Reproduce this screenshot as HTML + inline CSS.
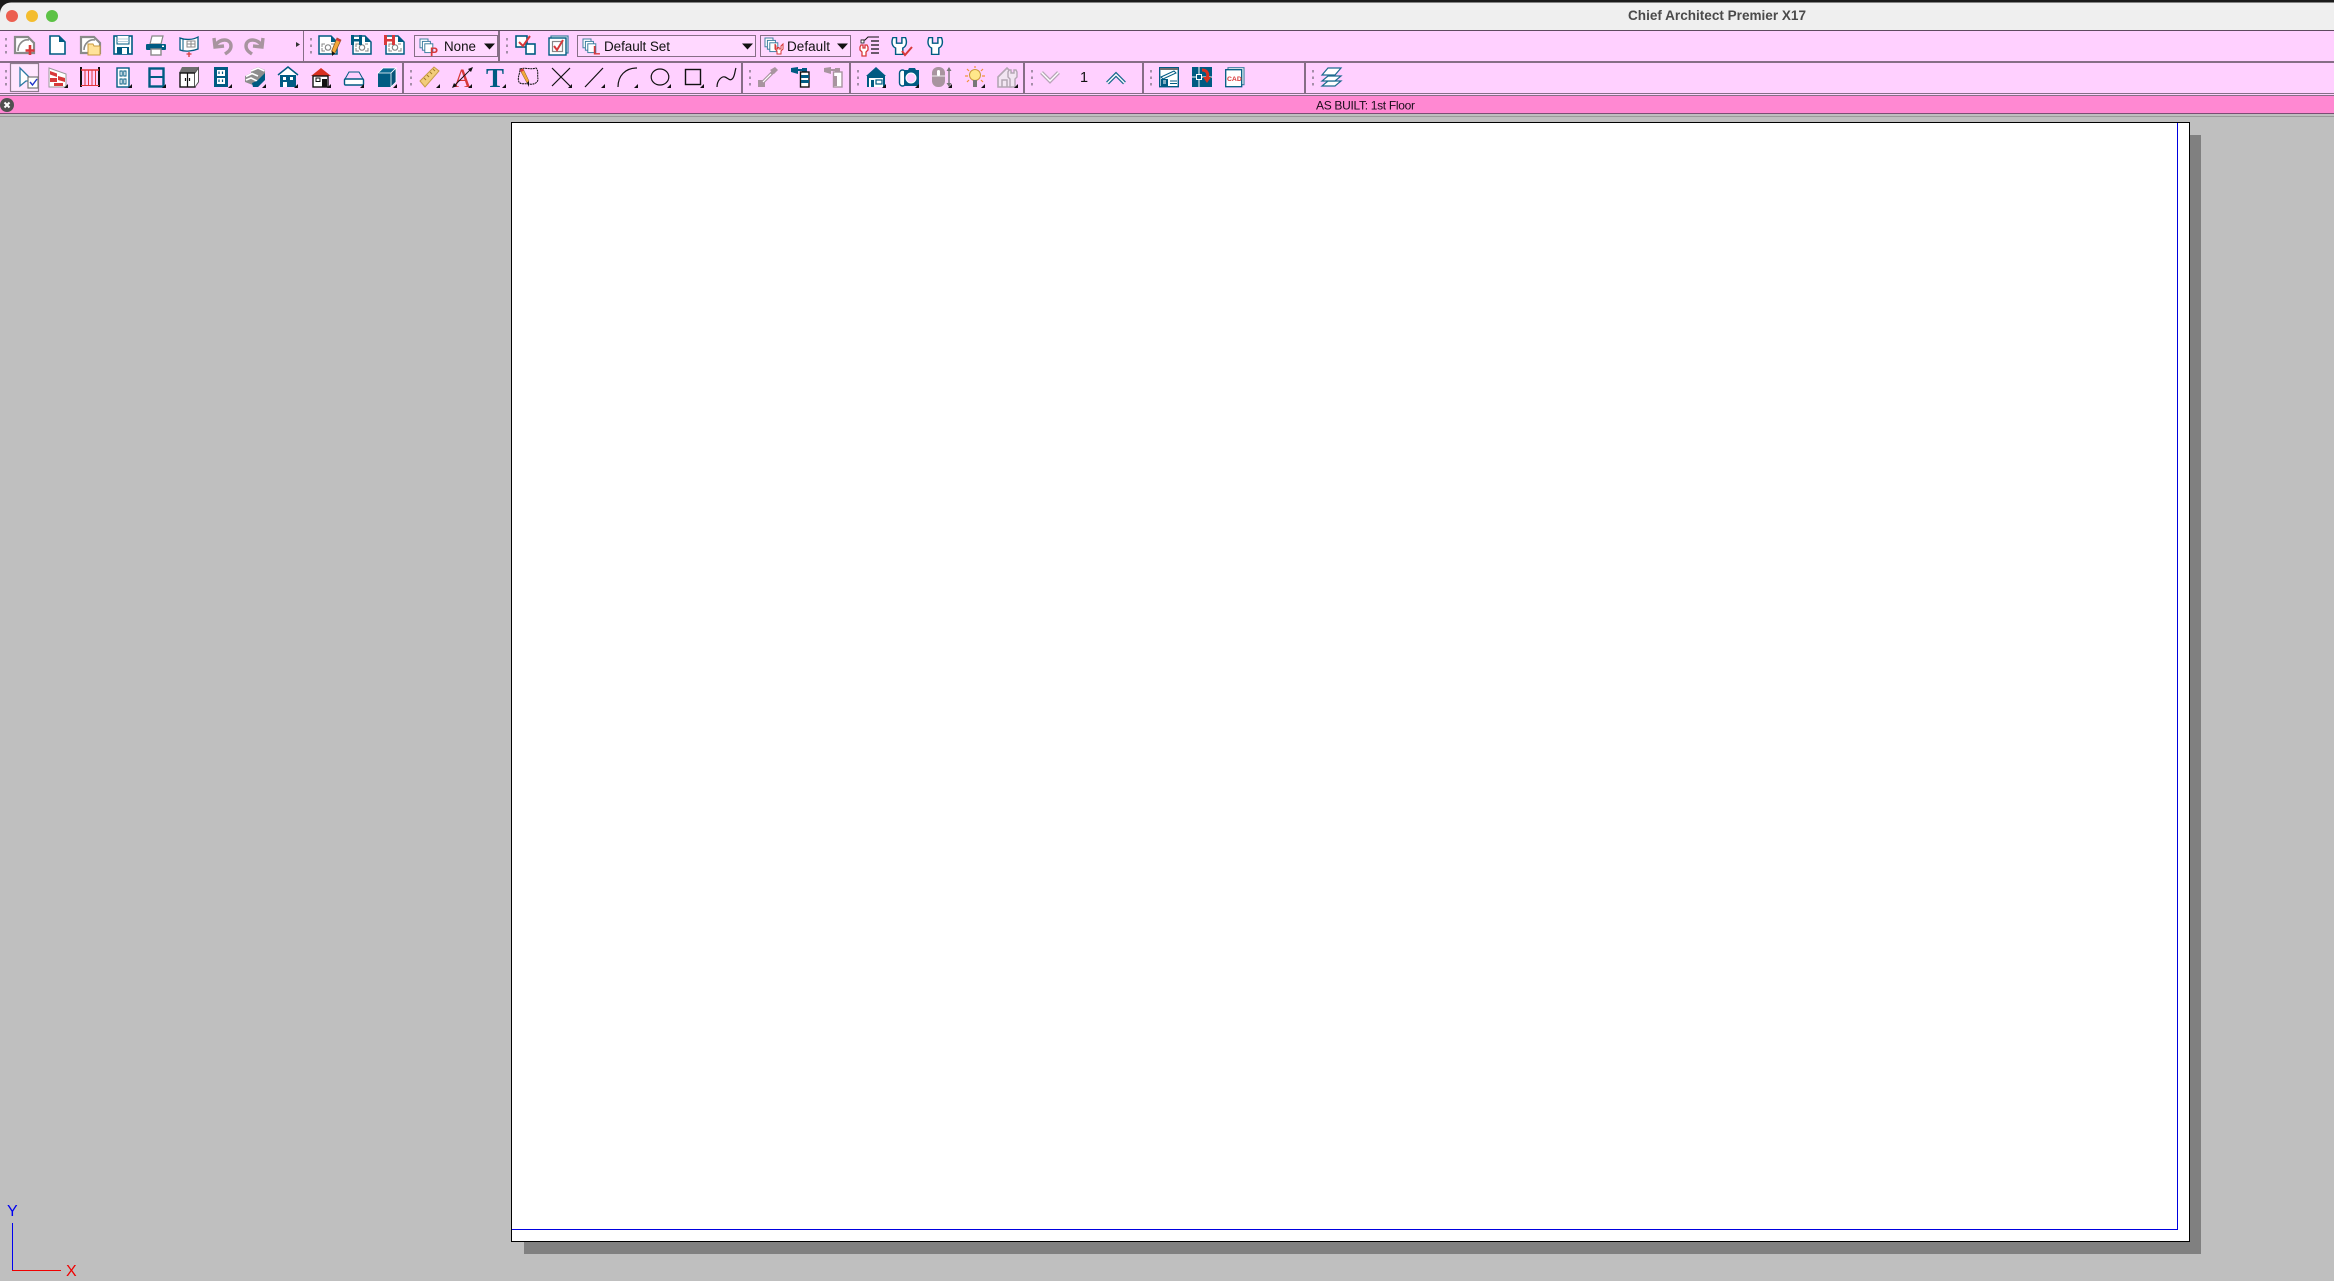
<!DOCTYPE html>
<html><head><meta charset="utf-8"><title>Chief Architect Premier X17</title>
<style>
html,body{margin:0;padding:0;width:2334px;height:1281px;overflow:hidden;background:#bfbfbf}
svg{position:absolute;left:0;top:0;display:block}
text{font-family:"Liberation Sans",sans-serif}
</style></head><body>
<svg width="2334" height="1281" viewBox="0 0 2334 1281" xmlns="http://www.w3.org/2000/svg" shape-rendering="geometricPrecision">
<defs>
<path id="tri" d="M0 4L4 0V4Z" fill="#111"/>
<g id="grip" fill="#a58ea8"><rect x="0" y="0" width="2" height="2.5"/><rect x="0" y="6.5" width="2" height="2.5"/><rect x="0" y="13" width="2" height="2.5"/></g>
<g id="cdoc"><path d="M1 1H13L19 7V19H1Z" fill="#fff" stroke="#005b82" stroke-width="1.5"/><path d="M13 1V7H19Z" fill="#005b82"/><path d="M4 12V9H7M13 9H16M4 13V16H7M13 16H16V13" fill="none" stroke="#888" stroke-width="1"/><circle cx="10" cy="12.5" r="2.7" fill="none" stroke="#888" stroke-width="1.2"/></g>
<g id="stack"><rect x="0" y="0" width="10" height="11" fill="#fff" stroke="#3a7d9e" stroke-width="1.2"/><rect x="3" y="3" width="10" height="11" fill="#fff" stroke="#3a7d9e" stroke-width="1.2"/><rect x="6" y="6" width="10" height="11" fill="#fff" stroke="#3a7d9e" stroke-width="1.2"/></g>
<path id="wrench" d="M1 2H5V9H11V2H15C17 8 16 13 12 15V23H4V15C0 13 -1 8 1 2Z" fill="#fff" stroke="#005b82" stroke-width="1.6"/>
</defs>

<!-- window chrome -->
<rect width="2334" height="2.5" fill="#1b1b1b"/>
<rect y="0" width="24" height="24" fill="#1b1b1b"/>
<path d="M0 30V13A11 11 0 0 1 11 2.5H2334V30Z" fill="#efefef"/>
<circle cx="12" cy="16" r="6" fill="#ec5f50"/><circle cx="32" cy="16" r="6" fill="#f4bd2e"/><circle cx="52" cy="16" r="6" fill="#5cc245"/>
<text x="1628" y="20" font-size="13.5" font-weight="700" fill="#4a4a4a" textLength="178" lengthAdjust="spacingAndGlyphs">Chief Architect Premier X17</text>

<!-- toolbars -->
<rect y="30" width="2334" height="66" fill="#ffd0ff"/>
<rect y="30" width="2334" height="1" fill="#5e4a60"/>
<rect y="61" width="2334" height="2" fill="#866e86"/>
<rect y="93" width="2334" height="1" fill="#866e86"/>
<rect y="94" width="2334" height="1.5" fill="#ffd0ff"/>
<rect y="95" width="2334" height="1" fill="#866e86"/>
<rect y="96" width="2334" height="17" fill="#ff88d2"/>
<rect y="113" width="2334" height="1" fill="#7a4d74"/>
<rect y="114" width="2334" height="2" fill="#bfbfbf"/>
<rect y="116" width="2334" height="1" fill="#9a9a9a"/>

<!-- separators row 1 -->
<rect x="303" y="31" width="1" height="30" fill="#866e86"/>
<rect x="498" y="31" width="2" height="30" fill="#866e86"/>
<!-- separators row 2 -->
<g fill="#866e86">
<rect x="402" y="63" width="2" height="30"/><rect x="741" y="63" width="2" height="30"/><rect x="849" y="63" width="2" height="30"/><rect x="1023" y="63" width="2" height="30"/><rect x="1142" y="63" width="2" height="30"/><rect x="1304" y="63" width="2" height="30"/>
</g>
<!-- grips -->
<use href="#grip" x="5" y="38"/><use href="#grip" x="310" y="38"/><use href="#grip" x="506" y="38"/>
<use href="#grip" x="5" y="70"/><use href="#grip" x="410" y="70"/><use href="#grip" x="749" y="70"/><use href="#grip" x="857" y="70"/><use href="#grip" x="1031" y="70"/><use href="#grip" x="1150" y="70"/><use href="#grip" x="1312" y="70"/>

<!-- ROW 1 -->
<g transform="translate(14,35)"><path d="M1 2H14L20 8V18H1Z" fill="#fff" stroke="#8a8a8a" stroke-width="2.2"/><path d="M4 16C4 9 9 4 15 5" fill="none" stroke="#8a8a8a" stroke-width="1.6"/><path d="M16 10V20M11.5 15.5H20.5" stroke="#d8383a" stroke-width="2.6"/></g>
<g transform="translate(49,35)"><path d="M1 1H10L16 7V19H1Z" fill="#fff" stroke="#005b82" stroke-width="1.6"/><path d="M10 1V7H16Z" fill="#005b82"/></g>
<g transform="translate(80,35)"><path d="M1 2H14L20 8V18H1Z" fill="#fff" stroke="#8a8a8a" stroke-width="2.2"/><path d="M4 15C4 9 9 4 15 5" fill="none" stroke="#8a8a8a" stroke-width="1.6"/><path d="M8 9H13L14 11H20V20H8Z" fill="#ffe29a" stroke="#c99a3c" stroke-width="1"/></g>
<g transform="translate(113,35)"><rect x="1" y="1" width="18" height="18" fill="#fff" stroke="#005b82" stroke-width="1.6"/><path d="M4 1V9H16V1" fill="#fff" stroke="#005b82" stroke-width="1"/><path d="M4 4H16M4 6.5H16" stroke="#9fc0cf" stroke-width=".8"/><rect x="4" y="12" width="12" height="7" fill="#005b82"/><rect x="9" y="13" width="5" height="6" fill="#fff"/></g>
<g transform="translate(146,35)"><path d="M6 1H17L15 9H4Z" fill="#fff" stroke="#888" stroke-width="1.2"/><rect x="0" y="9" width="20" height="6" rx="1" fill="#005b82"/><rect x="16" y="10.5" width="2" height="1.5" fill="#fff"/><rect x="5" y="14" width="10" height="6" fill="#fff" stroke="#888" stroke-width="1.4"/></g>
<g transform="translate(179,35)"><path d="M1 3C6 5 14 5 19 2V14C14 16 6 17 1 15Z" fill="#fff" stroke="#005b82" stroke-width="1.3"/><path d="M4 4V15" stroke="#005b82" stroke-width="1"/><path d="M8 6H16V12H8ZM8 9H16M12 6V12" fill="none" stroke="#8a8a8a" stroke-width="1"/><path d="M10 17V22M7.5 19H12.5" stroke="#d8383a" stroke-width="1.3"/></g>
<!-- undo/redo -->
<g fill="none" stroke="#a8949f" stroke-width="3.4"><path d="M215 46C219 38 231 38 231 46C231 50 228 52 225 54"/><path d="M214 38L215 47L224 46"/><path d="M262 46C258 38 246 38 246 46C246 50 249 52 252 54"/><path d="M263 38L262 47L253 46"/></g>
<path d="M296 42L300 44.5L296 47Z" fill="#333"/>
<!-- pencil doc -->
<g transform="translate(318,35)"><use href="#cdoc"/><path d="M19 3L23 5L17 18L14 18.5L14 15Z" fill="#f4a63a" stroke="#7a5a20" stroke-width=".7"/><path d="M19 3L23 5L22 7L18 5Z" fill="#d8383a"/><path d="M14 16L14 21L17 18.5Z" fill="#111"/></g>
<g transform="translate(351,35)"><use href="#cdoc" x="1" y="0"/><path d="M0 0H3V4H8V0H11V10H8V6.5H3V10H0Z" fill="#005b82"/></g>
<g transform="translate(384,35)"><use href="#cdoc" x="1" y="0"/><path d="M0 0H3V4H8V0H11V10H8V6.5H3V10H0Z" fill="#d8383a"/></g>
<!-- None combo -->
<rect x="414.5" y="35.5" width="83" height="21" fill="#ffd8ff" stroke="#866e86" stroke-width="1"/>
<use href="#stack" transform="translate(420,39) scale(.8)"/><text x="430" y="56" font-size="12" fill="#d8383a" font-weight="700">P</text>
<text x="444" y="51" font-size="13.5" fill="#111" textLength="32" lengthAdjust="spacingAndGlyphs">None</text>
<path d="M484 43.5H495L489.5 49.5Z" fill="#111"/>
<!-- check icons -->
<g transform="translate(515,35)"><rect x="1" y="1" width="11" height="11" fill="#fff" stroke="#005b82" stroke-width="1.6"/><rect x="11" y="9" width="9" height="10" fill="#fff" stroke="#005b82" stroke-width="1.6"/><path d="M4 7L8 11L15 1" fill="none" stroke="#d8383a" stroke-width="2"/></g>
<g transform="translate(548,35)"><rect x="3" y="1" width="17" height="17" fill="#fff" stroke="#3a7d9e" stroke-width="1.2"/><rect x="1" y="3" width="17" height="17" fill="#fff" stroke="#005b82" stroke-width="1.4"/><rect x="4.5" y="6.5" width="10" height="10" fill="none" stroke="#888" stroke-width="1.2"/><path d="M6 11L9 15L15 5" fill="none" stroke="#d8383a" stroke-width="2"/></g>
<!-- Default Set combo -->
<rect x="577.5" y="35.5" width="178" height="21" fill="#ffd8ff" stroke="#866e86" stroke-width="1"/>
<use href="#stack" transform="translate(583,39) scale(.8)"/><text x="593" y="54.5" font-size="12" fill="#d8383a" font-weight="700">L</text>
<text x="604" y="51" font-size="13.5" fill="#111" textLength="66" lengthAdjust="spacing">Default Set</text>
<path d="M742 43.5H753L747.5 49.5Z" fill="#111"/>
<!-- Default combo -->
<rect x="760.5" y="35.5" width="90" height="21" fill="#ffd8ff" stroke="#866e86" stroke-width="1"/>
<use href="#stack" transform="translate(765,38) scale(.8)"/><path d="M776 46V49H777.5V47.5H779V49H781V46L783 44V49L781 51V54H777V51L775 49V44Z" fill="#fff" stroke="#d8383a" stroke-width="1"/>
<text x="787" y="51" font-size="13.5" fill="#111" textLength="43" lengthAdjust="spacing">Default</text>
<path d="M837 43.5H848L842.5 49.5Z" fill="#111"/>
<!-- wrench icons -->
<g transform="translate(860,36)"><path d="M1 4H5L8 1H19M3 4V6" fill="none" stroke="#111" stroke-width="1"/><rect x="1" y="4" width="3" height="3" fill="#fff" stroke="#111" stroke-width=".8"/><path d="M11 5H19M11 9H19M11 13H19M11 17H19" stroke="#111" stroke-width="1.2"/><path d="M1 9H3V12H5V9H7L8 11V14L6 16V20H2V16L0 14V11Z" fill="#fff" stroke="#d8383a" stroke-width="1.3"/></g>
<g transform="translate(892,36)"><g transform="scale(.9,.8)"><use href="#wrench"/></g><path d="M10 15L13 19L20 11" fill="none" stroke="#d8383a" stroke-width="2"/></g>
<g transform="translate(928,36)"><g transform="scale(.9,.8)"><use href="#wrench"/></g></g>

<!-- ROW 2 -->
<rect x="10.5" y="63.5" width="28" height="28" fill="#ffe6ff" stroke="#8e7c8e" stroke-width="1.2"/>
<g transform="translate(19,67)"><path d="M1 1L14 14H7L1 19Z" fill="#fff" stroke="#2b7aa3" stroke-width="1.3"/><rect x="9" y="10" width="10" height="11" fill="#fff" stroke="#777" stroke-width="1.2"/><path d="M11 15L13.5 18L18 12" fill="none" stroke="#1f33c8" stroke-width="1.4"/></g>
<!-- wall -->
<g transform="translate(49,67)"><path d="M0 1L17 7V20H0Z" fill="#fff" stroke="#999" stroke-width="1"/><path d="M1 4L8 6.5V10L1 7.5ZM9 9L16 11V15L9 13ZM1 11H8V15H1ZM5 16H14V19H5Z" fill="#d8383a"/></g><use href="#tri" x="64" y="84"/>
<!-- railing -->
<g transform="translate(80,67)"><path d="M1 0V20M19 0V20" stroke="#111" stroke-width="2"/><path d="M1 3H19" stroke="#e0363a" stroke-width="1.6"/><path d="M1 18.5H19" stroke="#e0363a" stroke-width="1"/><path d="M5 3V18M8.5 3V18M12 3V18M15.5 3V18" stroke="#e0363a" stroke-width="1"/></g>
<!-- door -->
<g transform="translate(116,67)"><rect x="1" y="1" width="12" height="19" fill="#fff" stroke="#005b82" stroke-width="1.4"/><path d="M4 4H6.2V9H4ZM7.8 4H10V9H7.8ZM4 12H6.2V17H4ZM7.8 12H10V17H7.8Z" fill="#fff" stroke="#005b82" stroke-width=".9"/></g><use href="#tri" x="128" y="84"/>
<!-- window -->
<g transform="translate(148,67)"><rect x="1.5" y="1.5" width="14" height="18" fill="#ffd0ff" stroke="#005b82" stroke-width="2.4"/><path d="M1.5 10H15.5" stroke="#005b82" stroke-width="2"/></g><use href="#tri" x="162" y="84"/>
<!-- cabinet -->
<g transform="translate(179,67)"><path d="M3 0H20L17 6H0Z" fill="#6e6e6e"/><rect x="1" y="6" width="15" height="14" fill="#fff" stroke="#111" stroke-width="1.4"/><path d="M16 6L19.5 1V15L16 20" fill="#fff" stroke="#555" stroke-width="1"/><path d="M8.5 6V20M6.5 11V14M10.5 11V14" stroke="#111" stroke-width="1.2"/></g>
<!-- outlet -->
<g transform="translate(214,67)"><rect x="0" y="0" width="14" height="20" fill="#005b82"/><rect x="3" y="3" width="8" height="6" fill="#fff"/><rect x="3" y="11" width="8" height="6" fill="#fff"/><path d="M5 4.5V7M8.5 4.5V7M5 12.5V15M8.5 12.5V15" stroke="#005b82" stroke-width="1.2"/></g><use href="#tri" x="228" y="84"/>
<!-- stairs -->
<g transform="translate(245,66)"><path d="M0 10L6 7V4L13 1L20 4V13L13 21L0 16Z" fill="#8d8d8d"/><path d="M1 10.5L7 7.5L13 10M6 5L13 2L19.5 5M1 14L6 12L12 15" stroke="#fff" stroke-width="1.6" fill="none"/><path d="M12 15L20 7V14L13 21H8L7 17Z" fill="#005b82"/></g><use href="#tri" x="262" y="84"/>
<!-- house outline -->
<g transform="translate(278,67)"><path d="M0 8L10 0L20 8" fill="#fff" stroke="#005b82" stroke-width="1.5"/><rect x="2" y="8" width="16" height="12" fill="#005b82"/><rect x="5" y="10" width="3" height="3" fill="#fff"/><rect x="12" y="10" width="3" height="3" fill="#fff"/><rect x="5" y="15" width="4" height="5" fill="#fff"/></g><use href="#tri" x="294" y="84"/>
<!-- red house -->
<g transform="translate(311,67)"><path d="M0 9L10 1L20 9Z" fill="#d8301f"/><rect x="2" y="9" width="15" height="11" fill="#fff" stroke="#111" stroke-width="1.4"/><rect x="5" y="11" width="4" height="3.5" fill="#fff" stroke="#111"/><rect x="11" y="12" width="5" height="8" fill="#111"/></g><use href="#tri" x="327" y="84"/>
<!-- dome -->
<g transform="translate(344,71)"><path d="M5 1H15L19 8H1Z" fill="#ffd0ff" stroke="#005b82" stroke-width="1"/><rect x="0.5" y="8" width="19" height="6" rx="1" fill="#fff" stroke="#005b82" stroke-width="1.4"/></g><use href="#tri" x="360" y="84"/>
<!-- cube -->
<g transform="translate(378,67)"><path d="M0 6H13V20H0Z" fill="#005b82"/><path d="M0 6L5 1H18L13 6Z" fill="#0b6a92" stroke="#fff" stroke-width=".8"/><path d="M13 6L18 1V15L13 20Z" fill="#0a5478" stroke="#fff" stroke-width=".8"/></g><use href="#tri" x="393" y="84"/>
<!-- ruler -->
<g transform="translate(419,67)"><path d="M1 14L15 0L20 4L6 20Z" fill="#f2cc7a" stroke="#c79b45" stroke-width="1"/><path d="M5 11L7 13M8 8L10 10M11 5L13 7M14 2L16 4" stroke="#a57a2a" stroke-width="1"/></g><use href="#tri" x="436" y="84"/>
<!-- dim A -->
<g transform="translate(452,67)"><text x="1" y="20" font-size="26" fill="#d8383a" style="font-family:'Liberation Serif',serif">A</text><path d="M1 20L20 1" stroke="#111" stroke-width=".9"/><path d="M0 21L5 19L2 16ZM21 0L16 2L19 5Z" fill="#111"/></g><use href="#tri" x="468" y="84"/>
<!-- T -->
<text x="486" y="87" font-size="27" fill="#005b82" font-weight="700" style="font-family:'Liberation Serif',serif">T</text><use href="#tri" x="502" y="84"/>
<!-- pencil shape -->
<g transform="translate(518,67)"><path d="M2 2C7 0 12 3 18 1C21 4 19 8 20 12C20 16 15 18 11 17C7 16 3 18 1 15C-1 11 2 7 2 2Z" fill="none" stroke="#111" stroke-width="1" stroke-dasharray="2 .6"/><path d="M2 3L5 1.5L11 14L9 16Z" fill="#f4a63a" stroke="#7a5a20" stroke-width=".5"/><path d="M2 3L5 1.5L6 3.5L3 5Z" fill="#d8383a"/><path d="M9 16L11 20L11 14Z" fill="#111"/></g>
<!-- X -->
<path d="M552 68L570 86M570 68L552 86" stroke="#111" stroke-width="1.2"/><use href="#tri" x="568" y="84"/>
<!-- line -->
<path d="M585 87L603 68" stroke="#111" stroke-width="1.2"/><use href="#tri" x="601" y="84"/>
<!-- arc -->
<path d="M618 87C618 76 625 68 637 68" fill="none" stroke="#111" stroke-width="1.2"/><use href="#tri" x="634" y="84"/>
<!-- ellipse -->
<ellipse cx="660" cy="77" rx="8.8" ry="8" fill="none" stroke="#111" stroke-width="1.2"/><use href="#tri" x="667" y="84"/>
<!-- rect -->
<rect x="685.5" y="69.5" width="15" height="15" fill="none" stroke="#111" stroke-width="1.4"/><use href="#tri" x="700" y="84"/>
<!-- spline -->
<path d="M717 87C717 80 722 76 725 77C728 78 730 82 733 78C735 75 735 70 736 68" fill="none" stroke="#111" stroke-width="1.2"/>
<!-- dropper -->
<g transform="translate(758,67)"><rect x="0" y="13" width="7" height="7" fill="#a8949f"/><path d="M4 16L15 5" stroke="#a8949f" stroke-width="3.4"/><path d="M5 15L13 7" stroke="#fff" stroke-width="1.2"/><path d="M12 3L16 7L20 3L17 0Z" fill="#a8949f"/></g>
<!-- spray -->
<g transform="translate(791,67)"><path d="M0 1L7 0V7L0 5Z" fill="#005b82"/><path d="M6 3H11" stroke="#005b82" stroke-width="2"/><rect x="11" y="1" width="5" height="4" fill="#005b82"/><rect x="9.5" y="5" width="8.5" height="15" fill="#fff" stroke="#111" stroke-width="1.4"/><path d="M10 8H18V11H10ZM10 13H18V16H10Z" fill="#005b82"/></g>
<g transform="translate(824,67)"><path d="M0 1L7 0V7L0 5Z" fill="#a8949f"/><path d="M6 3H11" stroke="#a8949f" stroke-width="2"/><rect x="11" y="1" width="5" height="4" fill="#a8949f"/><rect x="9.5" y="5" width="8.5" height="15" fill="#fff" stroke="#a8949f" stroke-width="1.4"/><rect x="10" y="9" width="3" height="10" fill="#a8949f"/></g>
<!-- teal house -->
<g transform="translate(866,67)"><path d="M0 9L10 0L20 9Z" fill="#005b82"/><rect x="1" y="9" width="18" height="11" fill="#005b82"/><rect x="3" y="11" width="14" height="9" fill="#fff"/><rect x="5" y="13" width="3" height="7" fill="#005b82"/><rect x="10" y="13" width="6" height="4" fill="none" stroke="#005b82" stroke-width="1.2"/></g><use href="#tri" x="882" y="84"/>
<!-- camera -->
<g transform="translate(899,68)"><rect x="0.5" y="2" width="6" height="16" rx="3" fill="#fff" stroke="#005b82" stroke-width="1.4"/><path d="M5 2H9L10 0H16L17 2H20V18H5Z" fill="#005b82"/><circle cx="12" cy="10" r="5" fill="#ffd0ff" stroke="#fff" stroke-width="1"/></g><use href="#tri" x="915" y="84"/>
<!-- mouse -->
<g transform="translate(932,67)"><rect x="0" y="0" width="13" height="20" rx="6" fill="#a8949f"/><rect x="5" y="3" width="3" height="6" rx="1.5" fill="#fff"/><path d="M0 9H13" stroke="#fff" stroke-width=".8"/><path d="M17 1V19" stroke="#777" stroke-width="1.4"/><path d="M14.5 4L17 0L19.5 4ZM14.5 16L17 20L19.5 16Z" fill="#777"/></g><use href="#tri" x="948" y="84"/>
<!-- bulb -->
<g transform="translate(965,66)"><circle cx="10" cy="9" r="5.5" fill="#ffe88a" stroke="#c99a3c" stroke-width="1"/><rect x="8" y="14" width="4" height="7" fill="#777"/><path d="M10 0V2M2 3L4 5M18 3L16 5M0 10H3M20 10H17M2 16L4 14M18 16L16 14" stroke="#f2923a" stroke-width="1.2"/></g><use href="#tri" x="981" y="84"/>
<!-- gray house wrench -->
<g transform="translate(998,67)"><path d="M0 10L9 1L13 5V20H0Z" fill="#f2e5f2" stroke="#b3a6b3" stroke-width="1.6"/><path d="M4 20V13H9V20" fill="none" stroke="#b3a6b3" stroke-width="1.5"/><path d="M11 3H13V6H16V3H18L19 5V10L17 12V20H12V12L10 10V5Z" fill="#f2e5f2" stroke="#b3a6b3" stroke-width="1.4"/></g><use href="#tri" x="1014" y="84"/>
<!-- chevrons -->
<path d="M1041.5 72.5L1050 81L1058.5 72.5" fill="none" stroke="#b8a4b8" stroke-width="4"/>
<path d="M1041.5 72.5L1050 81L1058.5 72.5" fill="none" stroke="#fff" stroke-width="1.4"/>
<text x="1080" y="82" font-size="14.5" fill="#111" textLength="7">1</text>
<path d="M1107.5 83L1116 74.5L1124.5 83" fill="none" stroke="#1d6b90" stroke-width="4"/>
<path d="M1107.5 83L1116 74.5L1124.5 83" fill="none" stroke="#fff" stroke-width="1.4"/>
<!-- row2 last group -->
<g transform="translate(1159,67)"><rect x="0.7" y="0.7" width="18.6" height="19" fill="#fff" stroke="#005b82" stroke-width="1.4"/><rect x="1" y="1" width="18" height="2" fill="#6e6e6e"/><path d="M2 10L15 4L17 6L4 12Z" fill="none" stroke="#005b82" stroke-width="1"/><path d="M2 12H9V19H2ZM10 12H18" fill="#005b82"/><path d="M4 14H7M4 16H7" stroke="#fff" stroke-width="1"/><path d="M11 14H18M11 16.5H18" stroke="#005b82" stroke-width="1"/></g>
<g transform="translate(1192,67)"><rect x="0" y="0" width="20" height="20" fill="#005b82"/><path d="M7 0V20M0 10H20" stroke="#fff" stroke-width="1"/><rect x="4.5" y="7.5" width="5" height="5" fill="#005b82" stroke="#fff" stroke-width="1"/><path d="M10 3C15 3 17 7 15 11" fill="none" stroke="#d8301f" stroke-width="3"/><path d="M11 10H19L15 16Z" fill="#d8301f"/></g>
<g transform="translate(1225,67)"><rect x="3" y="0.7" width="16" height="17" fill="#fff" stroke="#3a7d9e" stroke-width="1.1"/><rect x="0.7" y="2.7" width="16" height="17" fill="#fff" stroke="#005b82" stroke-width="1.3"/><text x="2" y="14" font-size="6.8" font-weight="700" fill="#d8383a">CAD</text></g>
<g transform="translate(1321,67)" fill="#fff" stroke="#1d6b90" stroke-width="1.2"><path d="M1 14H14L20 9H7Z" transform="translate(0,5)"/><path d="M1 14H14L20 9H7Z" transform="translate(0,0)"/><path d="M1 8H14L20 1H7Z"/></g>

<!-- tab -->
<circle cx="7" cy="105" r="7" fill="#505050"/>
<path d="M4.5 102.5L9.5 107.5M9.5 102.5L4.5 107.5" stroke="#fff" stroke-width="2"/>
<text x="1316" y="109.5" font-size="12" fill="#1a0d1a" textLength="99" lengthAdjust="spacing">AS BUILT: 1st Floor</text>

<!-- paper -->
<rect x="524" y="135" width="1677" height="1119" fill="#808080"/>
<rect x="511.5" y="122.5" width="1678" height="1119" fill="#fff" stroke="#000" stroke-width="1"/>
<path d="M512 1229.5H2177.5V123" fill="none" stroke="#0000e0" stroke-width="1"/>

<!-- axis -->
<path d="M12.5 1223V1270" stroke="#0000f0" stroke-width="1"/>
<path d="M12 1270.5H61" stroke="#f00000" stroke-width="1"/>
<text x="7" y="1216" font-size="16" fill="#0000f0">Y</text>
<text x="66" y="1276" font-size="16" fill="#f00000">X</text>
</svg>
</body></html>
